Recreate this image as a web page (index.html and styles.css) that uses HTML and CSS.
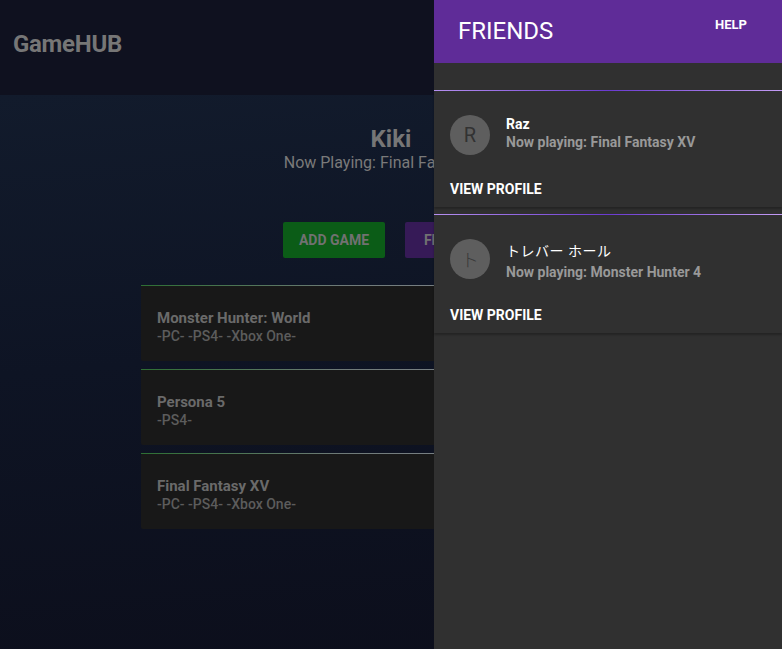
FILE: index.html
```html
<!DOCTYPE html>
<html lang="en">
<head>
<meta charset="utf-8">
<title>GameHUB</title>
<link rel="stylesheet" href="styles.css">
</head>
<body>
<header class="topbar">
  <div class="logo">GameHUB</div>
</header>
<main class="main">
  <section class="profile">
    <h1 class="profile-name">Kiki</h1>
    <p class="profile-status">Now Playing: Final Fantasy XV</p>
    <div class="profile-actions">
      <button class="btn btn-green">ADD GAME</button>
      <button class="btn btn-purple">FRIENDS</button>
    </div>
  </section>
  <ul class="games">
    <li class="game">
      <div class="game-title">Monster Hunter: World</div>
      <div class="game-platforms">-PC- -PS4- -Xbox One-</div>
    </li>
    <li class="game">
      <div class="game-title">Persona 5</div>
      <div class="game-platforms">-PS4-</div>
    </li>
    <li class="game">
      <div class="game-title">Final Fantasy XV</div>
      <div class="game-platforms">-PC- -PS4- -Xbox One-</div>
    </li>
  </ul>
</main>
<aside class="drawer">
  <div class="drawer-head">
    <div class="drawer-title">FRIENDS</div>
    <div class="drawer-help">HELP</div>
  </div>
  <div class="friends">
    <div class="friend">
      <div class="friend-line"></div>
      <div class="friend-card">
        <div class="friend-row">
          <div class="avatar">R</div>
          <div class="friend-info">
            <div class="friend-name">Raz</div>
            <div class="friend-status">Now playing: Final Fantasy XV</div>
          </div>
        </div>
        <div class="friend-action">VIEW PROFILE</div>
      </div>
    </div>
    <div class="friend">
      <div class="friend-line"></div>
      <div class="friend-card">
        <div class="friend-row">
          <div class="avatar avatar-jp">ト</div>
          <div class="friend-info">
            <div class="friend-name friend-name-jp">トレバー ホール</div>
            <div class="friend-status">Now playing: Monster Hunter 4</div>
          </div>
        </div>
        <div class="friend-action">VIEW PROFILE</div>
      </div>
    </div>
  </div>
</aside>
</body>
</html>
```

FILE: styles.css
```css
* { box-sizing: border-box; }
html, body { height: 100%; }
body {
  margin: 0;
  font-family: Roboto, "Noto Sans CJK JP", sans-serif;
  background: #0d0f1c;
  overflow: hidden;
}
.topbar {
  height: 95px;
  background: #0f111f;
  display: flex;
  align-items: center;
  padding: 0 13px;
}
.logo {
  font-size: 24px;
  font-weight: 700;
  color: #767676;
  margin-top: -7px;
  letter-spacing: -0.3px;
}
.main {
  height: calc(100% - 95px);
  background: linear-gradient(175deg, #121b2c 0%, #0e1424 45%, #0c0e1b 100%);
  padding-top: 28px;
}
.profile {
  text-align: center;
}
.profile-name {
  margin: 0;
  font-size: 24px;
  line-height: 32px;
  font-weight: 700;
  color: #767676;
}
.profile-status {
  margin: 0;
  font-size: 16px;
  line-height: 16px;
  color: #7a7a7a;
}
.profile-actions {
  display: flex;
  justify-content: center;
  gap: 20px;
  margin-top: 51px;
}
.btn {
  font-family: Roboto, sans-serif;
  height: 36px;
  border: none;
  border-radius: 2px;
  font-size: 14px;
  font-weight: 700;
  color: #717171;
  padding: 0;
}
.btn-green { background: #0b5c17; width: 102px; }
.btn-purple { background: #361a57; width: 94px; }
.games {
  list-style: none;
  margin: 27px auto 0;
  padding: 0;
  width: 500px;
  display: flex;
  flex-direction: column;
  gap: 8px;
}
.game {
  background: #181818;
  border-top: 1px solid #3a7a3e;
  border-image: linear-gradient(to right, #2d6f33, #6f7a78 40%, #8a8a9a) 1;
  border-radius: 2px;
  padding: 23px 16px 16px;
}
.game-title {
  font-size: 15px;
  line-height: 18px;
  font-weight: 700;
  color: #6a6a6a;
}
.game-platforms {
  font-size: 14px;
  line-height: 18px;
  font-weight: 500;
  color: #5c5c5c;
}
.drawer {
  position: fixed;
  top: 0;
  right: 0;
  width: 348px;
  height: 100%;
  background: #303030;
}
.drawer-head {
  height: 63px;
  background: #5f2c98;
  display: flex;
  justify-content: space-between;
  padding: 0 35px 0 24px;
}
.drawer-title {
  font-size: 24px;
  line-height: 24px;
  color: #fff;
  margin-top: 19px;
}
.drawer-help {
  font-size: 13px;
  font-weight: 700;
  color: #fff;
  margin-top: 18px;
  line-height: 14px;
}
.friends {
  padding-top: 27px;
}
.friend + .friend { margin-top: 7px; }
.friend-line {
  height: 1px;
  background: linear-gradient(to right, #b690f0, #6a3ad0 50%, #c49cf5);
}
.friend-card {
  background: #303030;
  padding: 24px 16px 8px;
  box-shadow: 0 2px 2px rgba(0,0,0,0.25);
}
.friend-row {
  display: flex;
  align-items: flex-start;
  gap: 16px;
}
.avatar {
  width: 40px;
  height: 40px;
  border-radius: 50%;
  background: #5e5e5e;
  color: #323232;
  font-size: 20px;
  display: flex;
  align-items: center;
  justify-content: center;
  flex: none;
}
.avatar-jp {
  font-size: 18px;
  font-weight: 300;
  color: #3a3a3a;
}
.friend-name {
  font-size: 14px;
  line-height: 18px;
  font-weight: 700;
  color: #fff;
}
.friend-name-jp {
  font-weight: 400;
  line-height: 24px;
  letter-spacing: 0.5px;
}
.friend-status {
  font-size: 14px;
  line-height: 18px;
  font-weight: 700;
  color: #999;
}
.friend-action {
  margin-top: 24px;
  font-size: 14px;
  line-height: 20px;
  font-weight: 700;
  color: #fff;
}
```
